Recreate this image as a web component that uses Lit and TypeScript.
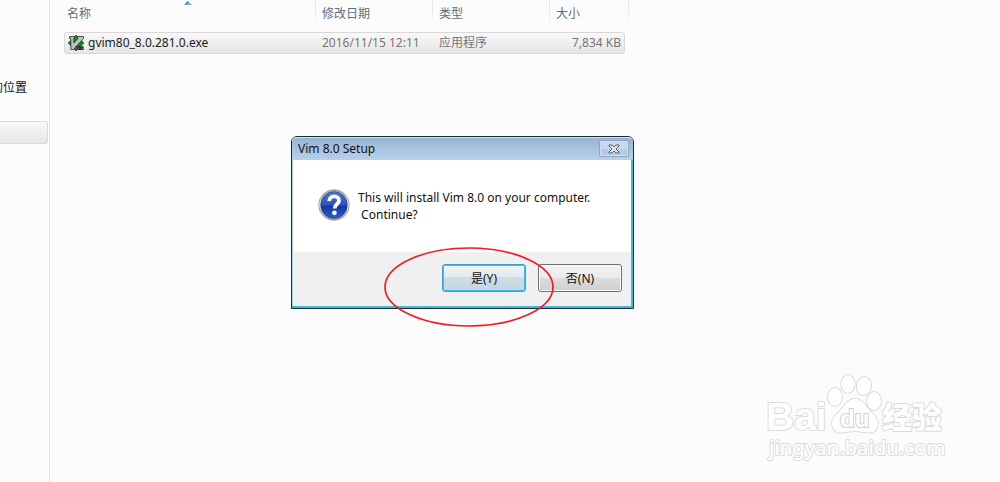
import { LitElement, html, svg, css } from "lit";
import { customElement, property } from "lit/decorators.js";

interface FileEntry {
  name: string;
  modified: string;
  kind: string;
  size: string;
}

const FILES: FileEntry[] = [
  { name: "gvim80_8.0.281.0.exe", modified: "2016/11/15 12:11", kind: "应用程序", size: "7,834 KB" },
];

const vimIcon = svg`
  <svg width="16" height="16" viewBox="0 0 16 16" aria-hidden="true">
    <path d="M8 0 L16 8 L8 16 L0 8 Z" fill="#0b8a18" stroke="#064a0a" stroke-width=".6"/>
    <path d="M1.5 1.5 H6.5 V3.5 H5.8 V8 L10 3.5 H9.5 V1.5 H15.5 V3.5 L5.5 14.5 H2.8 V3.5 H1.5 Z" fill="#c0c0c0" stroke="#2a2a2a" stroke-width=".8"/>
    <path d="M6.4 3 H8.8 V4 L6.4 6.6 Z M11.5 9 L15 5.6 V9 L12.5 11 Z" fill="#0b8a18"/>
    <path d="M8 15 V11 M10 15 V12 H11.5 V15 M13.2 15 V12 H14.8 V15" fill="none" stroke="#222" stroke-width="1.6"/>
    <path d="M8 14.5 V11.5 M10.7 14.5 V12.5 M14 14.5 V12.5" fill="none" stroke="#aaa" stroke-width=".7"/>
  </svg>`;

@customElement("file-list")
class FileList extends LitElement {
  @property({ attribute: false }) files: FileEntry[] = [];

  static styles = css`
    :host { display: block; }
    table { display: block; margin-left: 14px; font-size: 12px; line-height: 20px; }
    thead, tbody { display: block; }
    tr { display: grid; box-sizing: border-box; grid-template-columns: 252px 117px 117px 1fr; }
    .head { width: 565px; height: 24px; margin-bottom: 8px; }
    th {
      position: relative;
      padding: 4px 3px 0;
      text-align: left;
      font-weight: 400;
      color: #5d6c80;
      border-right: 1px solid;
      border-image: linear-gradient(#dce8f6, #e6eef8 60%, #fcfcfc) 1;
    }
    th + th { padding-left: 6px; }
    .sort { position: absolute; top: 0; left: 120px; display: block; }
    .row {
      width: 561px;
      height: 22px;
      border: 1px solid #d9d9d9;
      border-radius: 3px;
      background: linear-gradient(#f9f9f9, #e5e5e5);
    }
    td { padding: 0 5px; color: #767676; white-space: nowrap; }
    .name { display: flex; align-items: center; gap: 4px; padding-left: 3px; color: #1a1a1a; }
    .size { padding-right: 3px; text-align: right; }
  `;

  render() {
    return html`
      <table>
        <thead>
          <tr class="head">
            <th scope="col">名称
              <svg class="sort" width="8" height="5" viewBox="0 0 8 5" aria-hidden="true">
                <path d="M0 5 L4 1 L8 5 Z" fill="#7fb0d0"/><path d="M0 5 L4 1 V3 Z" fill="#3c6f93"/>
              </svg>
            </th>
            <th scope="col">修改日期</th>
            <th scope="col">类型</th>
            <th scope="col">大小</th>
          </tr>
        </thead>
        <tbody>
          ${this.files.map((f) => html`
            <tr class="row">
              <td class="name">${vimIcon}<span>${f.name}</span></td>
              <td>${f.modified}</td>
              <td>${f.kind}</td>
              <td class="size">${f.size}</td>
            </tr>`)}
        </tbody>
      </table>`;
  }
}

@customElement("setup-dialog")
class SetupDialog extends LitElement {
  static styles = css`
    :host { display: block; }
    .window {
      box-sizing: border-box;
      width: 343px;
      border: 1px solid #1e2a33;
      border-radius: 6px 6px 0 0;
      background: #fff;
      box-shadow: inset -2px -2px #45b9dc, inset 1px 0 #a9d4ea;
      font-size: 12px;
      line-height: 17px;
      color: #111;
    }
    .title {
      display: flex;
      align-items: center;
      justify-content: space-between;
      box-sizing: border-box;
      height: 23px;
      padding: 0 4px 1px 6px;
      border-top: 1px solid #d4e2f0;
      border-radius: 5px 5px 0 0;
      background: linear-gradient(#98b4d2, #b9d1ea);
    }
    h1 { margin: 0; font-size: 12px; font-weight: 400; }
    .close {
      display: grid;
      place-items: center;
      width: 30px;
      height: 17px;
      padding: 0;
      border: 1px solid #8fa6c3;
      border-radius: 2px;
      background: linear-gradient(#c5d8ee 50%, #b4cce6 50%);
      box-shadow: inset 0 0 0 1px #d0e0f1;
    }
    .body { display: flex; gap: 8px; padding: 29px 26px; }
    .body svg { flex: none; }
    p { margin: 0; white-space: pre; }
    .actions {
      display: flex;
      justify-content: flex-end;
      gap: 12px;
      margin: 0 2px 2px 1px;
      padding: 12px 9px 14px;
      background: #f0f0f0;
    }
    .push {
      width: 84px;
      height: 28px;
      padding: 0;
      border: 1px solid #707070;
      border-radius: 3px;
      background: linear-gradient(#f2f2f2, #ebebeb 50%, #dddddd 50%, #cfcfcf);
      box-shadow: inset 0 0 0 1px #fafafa;
      font: inherit;
      color: #111;
    }
    .primary {
      border-color: #3c9fd0;
      background: linear-gradient(#eef3f5, #e2eaee 45%, #d0dce3 45%, #c5d5de);
      box-shadow: inset 0 0 0 1px #3fc0ea;
    }
  `;

  render() {
    return html`
      <section class="window" role="dialog" aria-labelledby="title">
        <header class="title">
          <h1 id="title">Vim 8.0 Setup</h1>
          <button class="close" aria-label="Close">
            <svg width="12" height="10" viewBox="0 0 12 10" aria-hidden="true">
              <path d="M1 1 H4 L6 3 L8 1 H11 V2 L8 5 L11 8 V9 H8 L6 7 L4 9 H1 V8 L4 5 L1 2 Z" fill="#e4e4e4" stroke="#59616d"/>
            </svg>
          </button>
        </header>
        <div class="body">
          <svg width="32" height="34" viewBox="0 0 32 34" aria-hidden="true">
            <defs>
              <linearGradient id="rim" x2="0" y2="1"><stop stop-color="#a5a5a5"/><stop offset=".5" stop-color="#eee"/><stop offset="1" stop-color="#999"/></linearGradient>
              <linearGradient id="ball" x2="0" y2="1"><stop stop-color="#4f78d5"/><stop offset=".5" stop-color="#2851bd"/><stop offset=".55" stop-color="#1438a0"/><stop offset="1" stop-color="#2860cc"/></linearGradient>
            </defs>
            <circle cx="16" cy="16" r="15.3" fill="url(#rim)" stroke="#959595" stroke-width=".8"/>
            <circle cx="16" cy="16" r="13.3" fill="url(#ball)" stroke="#1b3785" stroke-width=".6"/>
            <path d="M11.2 12.2 C11.6 5.6 21 6.4 21 11.6 C21 15.2 16.6 15.2 16.6 19.4" fill="none" stroke="#fff" stroke-width="3.8"/>
            <circle cx="16.4" cy="23.8" r="2.4" fill="#fff"/>
          </svg>
          <p>This will install Vim 8.0 on your computer.<br> Continue?</p>
        </div>
        <footer class="actions">
          <button class="push primary">是(Y)</button>
          <button class="push">否(N)</button>
        </footer>
      </section>`;
  }
}

@customElement("app-root")
class AppRoot extends LitElement {
  static styles = css`
    :host {
      display: block;
      font-family: "Noto Sans", "Noto Sans CJK SC", sans-serif;
    }
    .desktop {
      position: relative;
      display: flex;
      min-height: 100vh;
      overflow: hidden;
      background: #fcfcfc;
    }
    .side {
      flex: none;
      box-sizing: border-box;
      width: 50px;
      padding-top: 78px;
      border-right: 1px solid #dbe5ee;
      font-size: 12px;
      line-height: 20px;
      color: #111;
      overflow: hidden;
    }
    .place { display: flex; justify-content: flex-end; width: 27px; white-space: nowrap; color: inherit; text-decoration: none; }
    .current {
      box-sizing: border-box;
      height: 23px;
      margin: 23px 1px 0 0;
      border: 1px solid #d9d9d9;
      border-left: 0;
      border-radius: 0 3px 3px 0;
      background: linear-gradient(#f9f9f9, #e6e6e6);
    }
    .main { flex: 1; min-width: 0; }
    .dialog { position: absolute; left: 291px; top: 136px; }
    .ring { position: absolute; left: 383px; top: 246px; pointer-events: none; }
    .mark { position: absolute; right: 43px; bottom: 14px; }
    .big { font: 700 39px "Liberation Sans", sans-serif; }
    .du { font: 700 24px "Liberation Sans", sans-serif; }
    .cjk { font: 900 30px "Noto Sans CJK SC", sans-serif; }
    .url { font: 500 20px "Noto Sans", sans-serif; }
  `;

  render() {
    return html`
      <div class="desktop">
        <nav class="side">
          <a class="place" href="#recent">的位置</a>
          <div class="current"></div>
        </nav>
        <main class="main"><file-list .files=${FILES}></file-list></main>
        <setup-dialog class="dialog"></setup-dialog>
        <svg class="ring" width="172" height="82" viewBox="0 0 172 82" aria-hidden="true">
          <ellipse cx="86" cy="41" rx="84" ry="39" fill="none" stroke="#ed1c24" stroke-width="1.7"/>
        </svg>
        <svg class="mark" width="192" height="96" viewBox="0 0 192 96" fill="#fff" stroke="#dcdcdc" stroke-width="2" paint-order="stroke" stroke-linejoin="round">
          <text class="big" x="1" y="58">Bai</text>
          <ellipse cx="70" cy="25" rx="7" ry="9"/>
          <ellipse cx="83" cy="12" rx="6.5" ry="9"/>
          <ellipse cx="99" cy="14" rx="7" ry="9" transform="rotate(12 99 14)"/>
          <ellipse cx="109" cy="29" rx="7" ry="9"/>
          <path d="M90 27 C98 27 100 34 106 40 C112 45 115 50 112 56 C108 64 98 59 90 59 C82 59 72 64 68 56 C65 50 68 45 74 40 C80 34 82 27 90 27 Z"/>
          <text class="du" x="75" y="55" stroke="#d0d0d0">du</text>
          <text class="cjk" x="117" y="56">经验</text>
          <text class="url" x="4" y="83">jingyan.baidu.com</text>
        </svg>
      </div>`;
  }
}
